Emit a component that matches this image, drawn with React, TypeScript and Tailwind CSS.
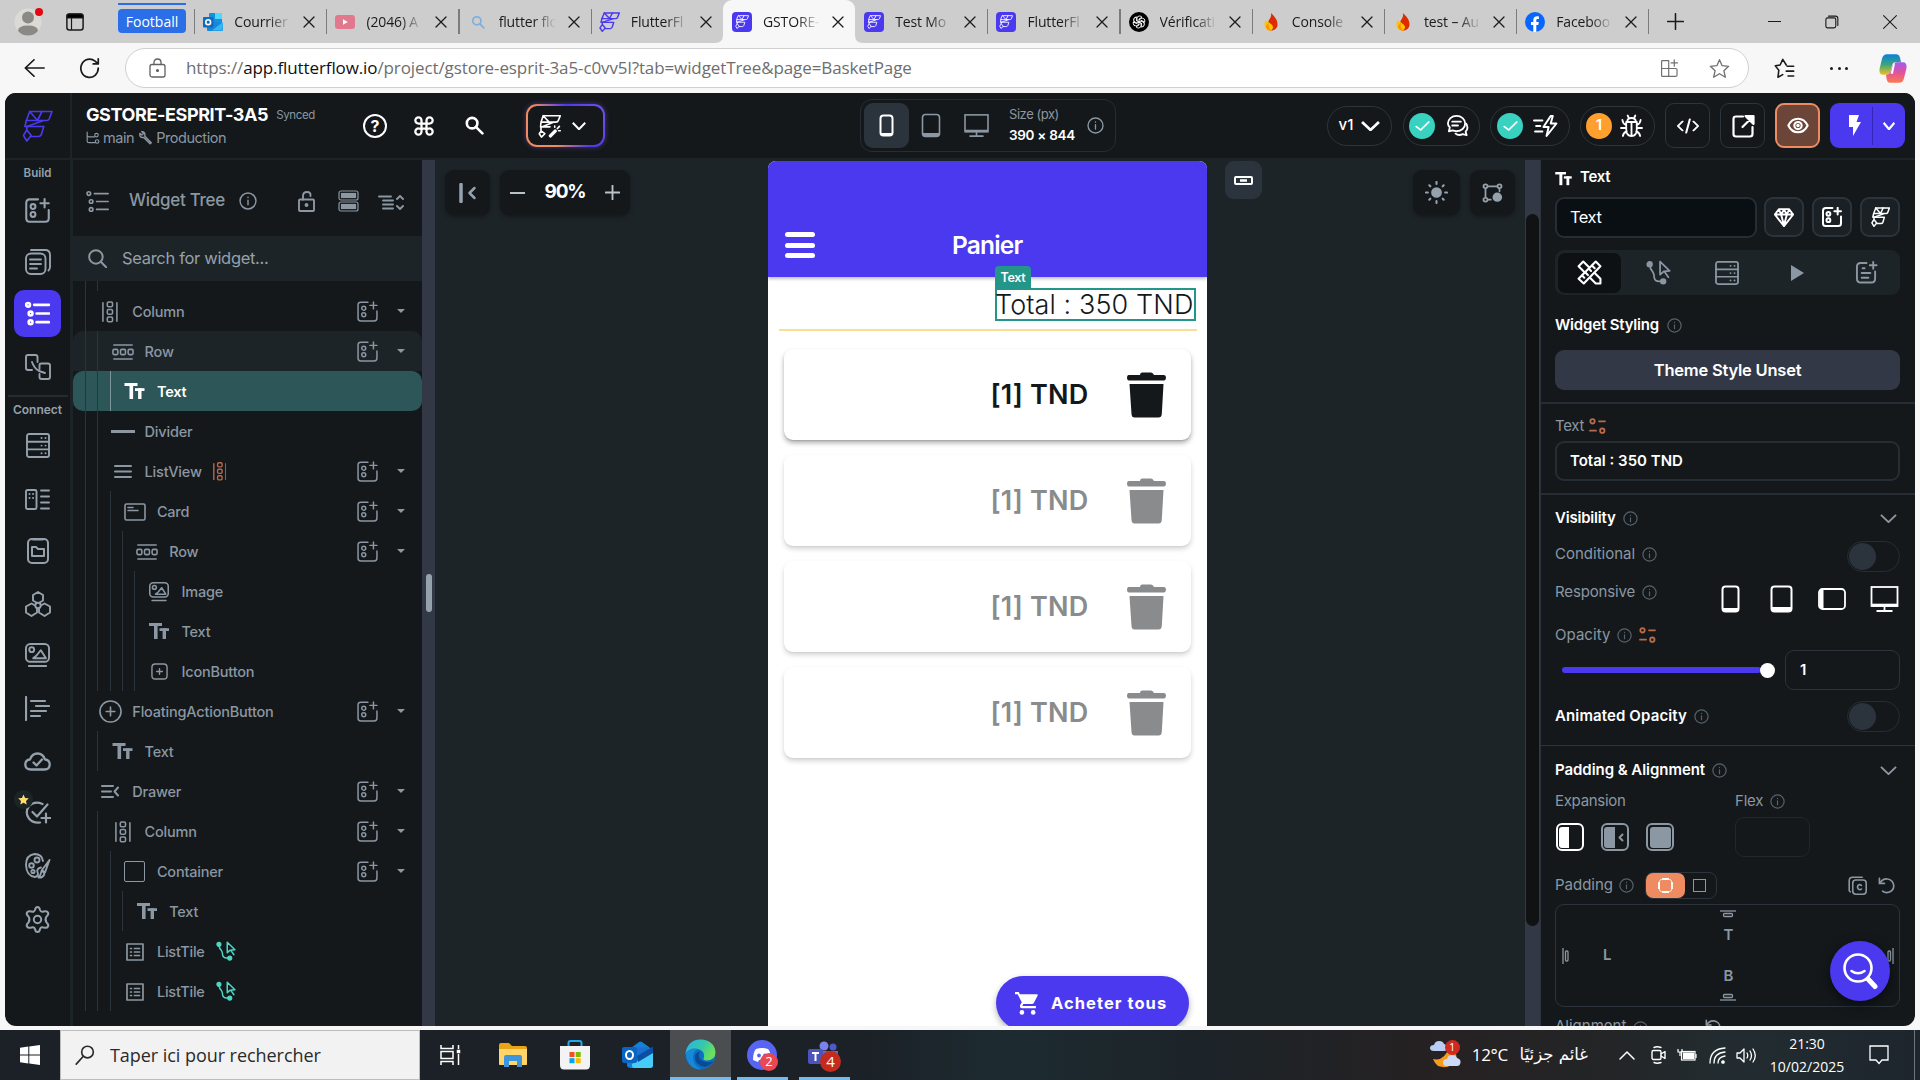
import React from "react";

type P = { className?: string };

function Svg({ w, h = w, vb = "0 0 24 24", sw = 2, className = "", children }: { w: number; h?: number; vb?: string; sw?: number; className?: string; children: React.ReactNode }) {
  return (
    <svg width={w} height={h} viewBox={vb} fill="none" stroke="currentColor" strokeWidth={sw} strokeLinecap="round" strokeLinejoin="round" className={"shrink-0 " + className} preserveAspectRatio="none">
      {children}
    </svg>
  );
}

/* ---------- shared icons ---------- */

function FlutterMark({ w, h = w, sw = 2, className = "" }: { w: number; h?: number; sw?: number; className?: string }) {
  return (
    <Svg w={w} h={h} vb="0 0 32 32" sw={sw} className={className}>
      <path d="M8 1.5H31L28 9Q27.300 10.500 25.500 10.500H4.500Z" />
      <path d="M8 1.500L16 10.500L20.500 1.500" />
      <path d="M4.500 10.500L3 16.500H22.500L20 24.500Q19 26.500 17 26.500H9.500" />
      <path d="M5 16.500L21 11" />
      <path d="M5 16.500V20L1.500 25.500L5 31L9.500 25.500L5 20" />
    </Svg>
  );
}

function Info({ s = 15, className = "text-[#57636c]" }: { s?: number; className?: string }) {
  return (
    <Svg w={s} sw={1.9} className={className}>
      <circle cx="12" cy="12" r="10.6" />
      <path d="M12 11v6M12 7v.3" />
    </Svg>
  );
}

function AddWidget({ s = 22, sw = 2, className = "" }: { s?: number; sw?: number; className?: string }) {
  return (
    <Svg w={s} sw={sw} className={className}>
      <path d="M12.5 1.3H4.5Q1.2 1.3 1.2 4.6V19.4Q1.2 22.8 4.5 22.8H19.4Q22.8 22.8 22.8 19.4V11.5" />
      <path d="M18.8 1v8M14.8 5h8" />
      <circle cx="7.7" cy="8.2" r="2.3" />
      <circle cx="7.7" cy="15.8" r="2.3" />
    </Svg>
  );
}

function TextGlyph({ w = 20, h = 17, className = "" }: { w?: number; h?: number; className?: string }) {
  return (
    <svg width={w} height={h} viewBox="0 0 20 17" fill="currentColor" className={"shrink-0 " + className}>
      <rect x="0" y="0" width="13" height="3" />
      <rect x="5" y="0" width="3.6" height="16" />
      <rect x="10.5" y="5.2" width="9.5" height="2.8" />
      <rect x="13.6" y="5.2" width="3.4" height="10.8" />
    </svg>
  );
}

function ColumnIcon({ s = 22, className = "" }: { s?: number; className?: string }) {
  return (
    <Svg w={s * 0.72} h={s} vb="0 0 17 24" sw={1.7} className={className}>
      <path d="M1 2v20M16 2v20" />
      <rect x="5.7" y="1" width="5.6" height="5.2" rx="1.4" />
      <rect x="5.7" y="9.2" width="5.6" height="5.2" rx="1.4" />
      <rect x="5.7" y="17.4" width="5.6" height="5.2" rx="1.4" />
    </Svg>
  );
}

function RowIcon() {
  return (
    <Svg w={22} h={16} vb="0 0 24 17" sw={1.7}>
      <path d="M2 1h20M2 16h20" />
      <rect x="1" y="5.7" width="5.4" height="5.6" rx="1.4" />
      <rect x="9.3" y="5.7" width="5.4" height="5.6" rx="1.4" />
      <rect x="17.6" y="5.7" width="5.4" height="5.6" rx="1.4" />
    </Svg>
  );
}

function ImageIcon({ s = 26, sw = 1.8 }: { s?: number; sw?: number }) {
  return (
    <Svg w={s} h={s} vb="0 0 26 26" sw={sw}>
      <rect x="1" y="1" width="24" height="18.5" rx="4.5" />
      <circle cx="7" cy="7" r="2.5" />
      <path d="M8.5 15.8L12 13L16.5 7.5L21.8 15.8Z" />
      <path d="M4 24h18" />
    </Svg>
  );
}

function ActionFlow({ s = 19, sw = 1.6, className = "" }: { s?: number; sw?: number; className?: string }) {
  return (
    <Svg w={s} sw={sw} className={className}>
      <circle cx="3.5" cy="4" r="2.2" fill="currentColor" />
      <circle cx="16.5" cy="20.5" r="2.2" fill="currentColor" />
      <path d="M3.5 5Q4 9 6.5 11.5Q8 13.5 7.8 16Q8 20.5 13 20.5H16" />
      <path d="M13.5 1.5V14L17 11L22.7 10.5Z" />
      <path d="M18 11.5L21.5 16.5" />
    </Svg>
  );
}

function DatabaseIcon({ w = 24, h = 25, sw = 1.9, className = "" }: { w?: number; h?: number; sw?: number; className?: string }) {
  return (
    <Svg w={w} h={h} vb="0 0 24 25" sw={sw} className={className}>
      <rect x="1" y="1" width="22" height="23" rx="2" />
      <path d="M1 8.7h22M1 16.4h22" />
      <path d="M15.5 5h.1M19.5 5h.1M15.5 12.6h.1M19.5 12.6h.1M15.5 20.3h.1M19.5 20.3h.1" />
    </Svg>
  );
}

function TreeIcon({ s = 25, sw = 2 }: { s?: number; sw?: number }) {
  return (
    <Svg w={s} h={s} vb="0 0 26 26" sw={sw}>
      <circle cx="3.2" cy="4" r="2" />
      <circle cx="5.8" cy="13" r="2" />
      <circle cx="5.8" cy="22" r="2" />
      <path d="M9.5 4H25M12 13H25M12 22H25" />
    </Svg>
  );
}

function Phone({ w = 13, h = 23, sw = 2, foot = 2 }: { w?: number; h?: number; sw?: number; foot?: number }) {
  return (
    <svg width={w + 2} height={h + 2} className="shrink-0" fill="none" stroke="currentColor" strokeWidth={sw}>
      <rect x="1.5" y="1.5" width={w - 1} height={h - 1} rx="3" />
      <rect x="2" y={h - foot} width={w - 2} height={foot} fill="currentColor" stroke="none" />
    </svg>
  );
}

function Monitor({ w = 25, h = 23 }: { w?: number; h?: number }) {
  return (
    <svg width={w} height={h} viewBox="0 0 28 26" className="shrink-0" fill="none" stroke="currentColor" strokeWidth="1.8">
      <rect x="1" y="1" width="26" height="19" />
      <path d="M1 19.2H27" strokeWidth="3" />
      <path d="M14 20V24M6 25H22" />
    </svg>
  );
}

function SetVar() {
  return (
    <Svg w={17} h={16} vb="0 0 17 16" sw={1.8} className="text-[#b86b4b]">
      <circle cx="3.5" cy="3.3" r="2.2" />
      <circle cx="13.3" cy="12.7" r="2.2" />
      <path d="M10 3.3h6M1 12.7h6" />
    </Svg>
  );
}

function Chevron({ w = 17, h = 9, sw = 2, className = "" }: { w?: number; h?: number; sw?: number; className?: string }) {
  return (
    <svg width={w} height={h} viewBox="0 0 18 10" fill="none" stroke="currentColor" strokeWidth={sw} className={"shrink-0 " + className} preserveAspectRatio="none">
      <path d="M1 1L9 9L17 1" />
    </svg>
  );
}

function Undo({ s = 17 }: { s?: number }) {
  return (
    <Svg w={s} sw={2.4}>
      <path d="M2 2v7h7" />
      <path d="M2.5 9C5 4.500 9 2.500 13 2.800C18.500 3.200 22.300 7.500 22.300 12.700C22.300 18 18 22 12.500 22C10 22 8 21.200 6.500 20" />
    </Svg>
  );
}

function MagicFF({ s = 28 }: { s?: number }) {
  return (
    <Svg w={s} vb="0 0 28 28" sw={1.9}>
      <path d="M6 2H26L23.500 8Q23 9.500 21 9.500H3.500ZM6 2L13 9.500M3.500 9.500L3 15H14M5 15L18 9.500M3.500 15.500V20L1.500 23L4 27L8 23L4 20" />
      <path d="M14.500 25.500L20 20" strokeWidth="4" />
      <path d="M19.500 15.500V14M24 19.500H26M22.500 17L25 14.500" />
    </Svg>
  );
}

/* ---------- browser chrome ---------- */

function FFFav() {
  return (
    <span className="flex h-5 w-5 items-center justify-center rounded-[4px] bg-[#4b39ef] text-white">
      <FlutterMark w={14} h={14} sw={2} />
    </span>
  );
}

function Flame() {
  return (
    <svg width="16" height="20" viewBox="0 0 16 20">
      <path d="M8 1C11 4 15 8 14.500 13C14 17 11 18.500 8 18.500C5 18.500 4 16 4.500 12C5 8 9 6 8 1Z" fill="#dd2c00" />
      <path d="M2.500 8C1 11 1 15 4 17.500C6.500 19.500 9.500 18.500 10 15.500C10.300 12.500 6 11.500 5.500 9.500C4.500 10.500 3.500 10 2.500 8Z" fill="#ffc400" />
      <path d="M6 10C5 14 6 18 9 18.600C5 19 3 17 3 14Z" fill="#ff9100" />
    </svg>
  );
}

const tabs: { t: string; icon: React.ReactNode; active?: boolean }[] = [
  {
    t: "Courrier",
    icon: (
      <svg width="20" height="20" viewBox="0 0 20 20">
        <rect x="6" y="1" width="13" height="10" rx="1" fill="#1490df" />
        <rect x="12" y="1" width="7" height="6" fill="#50d9ff" />
        <path d="M4 9L20 11V18Q20 19 19 19H5Q4 19 4 18Z" fill="#1a86d9" />
        <path d="M20 10L9 18.500H19.500Z" fill="#35b8f1" />
        <rect x="0" y="5" width="10.500" height="10.500" rx="1" fill="#0f6cbd" />
        <circle cx="5.200" cy="10.200" r="2.400" fill="none" stroke="#fff" strokeWidth="1.600" />
      </svg>
    ),
  },
  {
    t: "(2046) A",
    icon: (
      <svg width="20" height="14" viewBox="0 0 20 14">
        <rect width="20" height="14" rx="3" fill="#e2788d" />
        <path d="M8 4.200V9.800L12.800 7Z" fill="#fff" />
      </svg>
    ),
  },
  {
    t: "flutter flo",
    icon: (
      <Svg w={14} sw={3} className="text-[#7fb0dc]">
        <circle cx="10" cy="10" r="7" />
        <path d="M15.500 15.500L22 22" />
      </Svg>
    ),
  },
  { t: "FlutterFl", icon: <FlutterMark w={21} h={20} sw={2.2} className="text-[#4b39ef]" /> },
  { t: "GSTORE-", icon: <FFFav />, active: true },
  { t: "Test Mo", icon: <FFFav /> },
  { t: "FlutterFl", icon: <FFFav /> },
  {
    t: "Vérificati",
    icon: (
      <svg width="20" height="20" viewBox="0 0 20 20">
        <circle cx="10" cy="10" r="10" fill="#000" />
        <g fill="none" stroke="#fff" strokeWidth="0.900">
          {[0, 60, 120, 180, 240, 300].map((a) => (
            <path key={a} transform={`rotate(${a} 10 10)`} d="M8 9V6.300Q8.200 4 10.500 4Q12 4 13 5.200L10 7V10" />
          ))}
        </g>
      </svg>
    ),
  },
  { t: "Console", icon: <Flame /> },
  { t: "test – Au", icon: <Flame /> },
  {
    t: "Faceboo",
    icon: (
      <svg width="20" height="20" viewBox="0 0 20 20">
        <circle cx="10" cy="10" r="10" fill="#0866ff" />
        <path d="M8.300 20V13H6V10H8.300V8.300C8.300 5.500 9.700 4.200 12 4.200C12.800 4.200 13.500 4.300 13.900 4.400V7H12.600C11.600 7 11.300 7.500 11.300 8.500V10H13.800L13.300 13H11.300V20Z" fill="#fff" />
      </svg>
    ),
  },
];

function TabStrip() {
  return (
    <div className="flex h-[43px] shrink-0 items-center bg-[#cdcdcd] font-['Open_Sans','Noto_Sans',sans-serif] text-[14px] text-[#1b1b1b]">
      <div className="ml-[14px] h-[28px] w-[28px] overflow-visible">
        <svg width="29" height="28" viewBox="0 0 29 28">
          <circle cx="14" cy="14" r="13.500" fill="#dcdad5" />
          <circle cx="14" cy="9.500" r="6" fill="#8b8985" />
          <path d="M4 23Q4 17.500 14 17.500T24 23Q20 27.500 14 27.500T4 23Z" fill="#8b8985" />
          <circle cx="25" cy="4" r="4" fill="#e30613" />
        </svg>
      </div>
      <svg width="18" height="18" viewBox="0 0 18 18" className="ml-[24px]">
        <rect x="0.900" y="0.900" width="16.200" height="16.200" rx="2.500" fill="none" stroke="#1b1b1b" strokeWidth="1.500" />
        <path d="M1 5V3Q1 1 3 1H15Q17 1 17 3V5ZM5.500 5V17" fill="#000" stroke="#1b1b1b" strokeWidth="1.200" />
      </svg>
      <div className="ml-[34px] flex h-[43px] w-[68px] flex-col pt-[3px]">
        <div className="h-[2px] bg-[#2b6fe8]" />
        <div className="mt-1 flex h-[24px] items-center justify-center rounded-[4px] bg-[#2b6fe8] text-[14px] text-white">Football</div>
      </div>
      <div className="ml-[8px] flex h-full">
        {tabs.map((x, i) => (
          <div key={i} className={"relative flex h-[43px] w-[132.200px] items-center " + (x.active ? "rounded-t-[9px] bg-[#f7f7f7]" : "")}>
            {x.active && (
              <>
                <svg width="8" height="8" className="absolute -left-2 bottom-0">
                  <path d="M8 0V8H0Q8 8 8 0Z" fill="#f7f7f7" />
                </svg>
                <svg width="8" height="8" className="absolute -right-2 bottom-0">
                  <path d="M0 0V8H8Q0 8 0 0Z" fill="#f7f7f7" />
                </svg>
              </>
            )}
            <div className={"h-[25px] w-[1.300px] " + (x.active || tabs[i - 1]?.active ? "bg-transparent" : "bg-[#7c7c7c]")} />
            <div className="ml-[7px] flex w-[22px] items-center justify-center">{x.icon}</div>
            <div className="ml-[10px] w-[60px] overflow-hidden text-[14px] tracking-[-0.150px] whitespace-nowrap [mask-image:linear-gradient(to_right,#000_58%,transparent_95%)]">{x.t}</div>
            <Svg w={12} sw={2.6} className="ml-[9px] text-[#1b1b1b]">
              <path d="M2 2L22 22M22 2L2 22" />
            </Svg>
          </div>
        ))}
        <div className="my-auto h-[25px] w-[1.300px] bg-[#7c7c7c]" />
      </div>
      <Svg w={17} sw={2.200} className="ml-[18px]">
        <path d="M12 1V23M1 12H23" />
      </Svg>
      <div className="ml-[84px] h-[1.500px] w-[13px] bg-[#1b1b1b]" />
      <Svg w={14} sw={1.900} className="ml-[44px]">
        <rect x="1.500" y="5" width="17" height="17" rx="3" />
        <path d="M6 2H18Q22 2 22 6V18" />
      </Svg>
      <Svg w={14} sw={1.800} className="ml-[44px]">
        <path d="M1 1L23 23M23 1L1 23" />
      </Svg>
    </div>
  );
}

function AddressBar() {
  return (
    <div className="flex h-[50px] shrink-0 items-center bg-[#f7f7f7] pl-[24px] font-['Open_Sans','Noto_Sans',sans-serif]">
      <Svg w={21} h={18} sw={1.900} className="text-[#1b1b1b]">
        <path d="M23 12H2M11.500 1L1.500 12L11.500 23" />
      </Svg>
      <Svg w={22} sw={1.900} className="ml-[34px] text-[#1b1b1b]">
        <path d="M21 12A9.500 10 0 1 1 17.500 4.500L21 7.500M21 2V7.500H15.500" />
      </Svg>
      <div className="ml-[24px] flex h-[40px] w-[1624px] items-center rounded-full border border-[#d0d0d0] bg-white pl-[23px]">
        <Svg w={17} h={20} vb="0 0 17 20" sw={1.300} className="text-[#616161]">
          <rect x="1" y="6.500" width="15" height="12.500" rx="2" />
          <path d="M5 6.500V4.500Q5 1 8.500 1T12 4.500V6.500" />
          <circle cx="8.500" cy="12.500" r="0.900" fill="currentColor" />
        </Svg>
        <div className="ml-[20px] text-[17px] tracking-[-0.105px] whitespace-nowrap text-[#6e6e6e]">
          https://<span className="text-[#101010]">app.flutterflow.io</span>/project/gstore-esprit-3a5-c0vv5l?tab=widgetTree&amp;page=BasketPage
        </div>
        <Svg w={19} sw={1.500} className="mr-[30px] ml-auto text-[#707070]">
          <path d="M2 3Q2 2 3 2H11V12H2ZM2 12H11V22H3Q2 22 2 21ZM11 12H20Q21.500 12 21.500 13.500V20.500Q21.500 22 20 22H11ZM18 1V9M14 5H22" />
        </Svg>
        <Svg w={21} sw={1.500} className="mr-[18px] text-[#707070]">
          <path d="M12 2L15 8.800L22.500 9.500L17 14.500L18.700 22L12 18L5.300 22L7 14.500L1.500 9.500L9 8.800Z" />
        </Svg>
      </div>
      <Svg w={21} sw={1.800} className="ml-[25px] text-[#1b1b1b]">
        <path d="M14 8L10 1.500L7 8L1.500 9L5.500 14L4.500 22L10 19M15 9.500H22.500M14 15H22.500M16 20.500H22.500" />
      </Svg>
      <div className="ml-[35px] flex gap-[4.500px]">
        <span className="h-[3px] w-[3px] rounded-full bg-[#1b1b1b]" />
        <span className="h-[3px] w-[3px] rounded-full bg-[#1b1b1b]" />
        <span className="h-[3px] w-[3px] rounded-full bg-[#1b1b1b]" />
      </div>
      <svg width="28" height="31" viewBox="0 0 28 27" preserveAspectRatio="none" className="ml-[31px]">
        <defs>
          <linearGradient id="cpA" x1="0" y1="0" x2="0" y2="1">
            <stop offset="0" stopColor="#0a7fe0" />
            <stop offset="0.500" stopColor="#3aa57a" />
            <stop offset="1" stopColor="#f2c01e" />
          </linearGradient>
          <linearGradient id="cpB" x1="0" y1="0" x2="0" y2="1">
            <stop offset="0" stopColor="#a35cf0" />
            <stop offset="0.500" stopColor="#e0529c" />
            <stop offset="1" stopColor="#ff7a4a" />
          </linearGradient>
        </defs>
        <path d="M8 1H17Q20 1 21 4L22 8H16Q14 8 13 11L11 17Q10 19 7 19H4Q0 19 0.500 14L3 5Q4 1 8 1Z" fill="url(#cpA)" />
        <path d="M20 26H11Q8 26 7.500 22L7 19Q10 19 11 17L14 10Q15 8 18 8H24Q28 8 27.500 13L25 22Q24 26 20 26Z" fill="url(#cpB)" />
        <path d="M14.500 9L11.500 18H14L16 9Z" fill="#fff" />
      </svg>
    </div>
  );
}

/* ---------- app header ---------- */

function Pill({ className, children }: { className: string; children: React.ReactNode }) {
  return <div className={"flex h-[40px] items-center rounded-full border border-[#2c343c] " + className}>{children}</div>;
}

function CheckDot() {
  return (
    <span className="flex h-[26px] w-[26px] items-center justify-center rounded-full bg-[#39d2c0]">
      <Svg w={15} h={12} sw={3} className="text-white">
        <path d="M2 13L9 20L22 4" />
      </Svg>
    </span>
  );
}

function Header() {
  return (
    <div className="flex h-[67px] shrink-0 items-center border-b-2 border-[#1d2428] bg-[#14181b] text-white">
      <div className="flex h-full w-[67px] items-center justify-center border-r-2 border-[#1d2428]">
        <FlutterMark w={31} h={32} sw={1.700} className="text-[#4b39ef]" />
      </div>
      <div className="ml-[14px] w-[240px] pt-[1px]">
        <div className="flex items-center gap-[8px]">
          <span className="text-[18px] leading-[22px] font-bold tracking-[-0.400px]">GSTORE-ESPRIT-3A5</span>
          <span className="pt-[2px] text-[11.500px] tracking-[-0.350px] text-[#8b97a2]">Synced</span>
        </div>
        <div className="mt-[1px] flex items-center text-[14.500px] tracking-[-0.450px] text-[#8b97a2]">
          <Svg w={14} sw={2}>
            <path d="M2 2V17Q2 20 5 20H15M2 7Q2 10 5 10H15" />
            <circle cx="18" cy="7" r="3" />
            <circle cx="19" cy="18" r="3" />
          </Svg>
          <span className="ml-[3px]">main</span>
          <Svg w={14} sw={2.400} className="ml-[5px]">
            <path d="M10 9L21 20L19 22L8 11Q3 12 1.500 8V4L5 7L8 4L4.500 1Q11 1 10 9Z" />
          </Svg>
          <span className="ml-[3px]">Production</span>
        </div>
      </div>
      <div className="ml-[37px] flex h-[24px] w-[24px] items-center justify-center rounded-full border-2 border-white text-[16px] font-bold">?</div>
      <Svg w={20} sw={2.700} className="ml-[27px]">
        <path d="M9 9H15V15H9ZM9 9V5.500A3.700 3.700 0 1 0 5.500 9H9M15 9H18.500A3.700 3.700 0 1 0 15 5.500V9M15 15V18.500A3.700 3.700 0 1 0 18.500 15H15M9 15H5.500A3.700 3.700 0 1 0 9 18.500V15" />
      </Svg>
      <Svg w={19} sw={3.300} className="ml-[31px]">
        <circle cx="9" cy="9" r="6.700" />
        <path d="M14 14L22 22" />
      </Svg>
      <div className="ml-[42px] h-[43px] w-[79px] rounded-[11px] bg-[linear-gradient(60deg,#ee8b60_0%,#ee8b60_30%,#4b39ef_62%,#6f54e6_100%)] p-[2px] shadow-[0_0_5px_rgba(130,90,220,0.5)]">
        <div className="flex h-full w-full items-center gap-[10px] rounded-[9px] bg-[#14181b] pl-[10px]">
          <MagicFF s={24} />
          <Chevron w={14} h={8} sw={2.600} />
        </div>
      </div>
      <div className="ml-[255px] flex h-[53px] w-[256px] items-center rounded-[12px] border border-[#262d34]">
        <div className="ml-[3px] flex h-[45px] w-[45px] items-center justify-center rounded-[9px] bg-[#2b343c]">
          <Phone w={13} h={21} />
        </div>
        <div className="ml-[12px] text-[#8b97a2]">
          <Phone w={18} h={23} sw={1.600} foot={3} />
        </div>
        <div className="ml-[23px] text-[#8b97a2]">
          <Monitor w={25} h={23} />
        </div>
        <div className="ml-[20px] w-[72px]">
          <div className="text-[13px] leading-[20px] tracking-[-0.450px] text-[#8b97a2]">Size (px)</div>
          <div className="text-[13.500px] leading-[23px] font-semibold tracking-[-0.300px] whitespace-nowrap">390 × 844</div>
        </div>
        <Info s={17} className="ml-[6px] text-[#8b97a2]" />
      </div>
      <Pill className="ml-[211px] w-[65px] justify-center gap-[8px]">
        <span className="text-[15px] font-medium">v1</span>
        <Chevron w={19} h={10} sw={2.500} />
      </Pill>
      <Pill className="ml-[11px] w-[77px] gap-[11px] pl-[5px]">
        <CheckDot />
        <Svg w={23} sw={1.900}>
          <path d="M11 2C16 2 20 5.500 20 10S16 18 11 18C9.500 18 8 17.700 7 17L3 18L4 14Q2 12 2 10C2 5.500 6 2 11 2Z" />
          <path d="M6.500 8H15.500M6.500 12H12.500M21 10Q24 15 20.500 18.500L21.500 22L17.500 21Q13 23 10 20.500" />
        </Svg>
      </Pill>
      <Pill className="ml-[10px] w-[80px] gap-[10px] pl-[6px]">
        <CheckDot />
        <Svg w={25} h={24} sw={1.900}>
          <path d="M17 2L10 13H15L13 22L22.500 9.500H17L19 2ZM1 6.500H9M3 12H7M2 17.500H9" />
        </Svg>
      </Pill>
      <Pill className="ml-[10px] w-[75px] gap-[8px] pl-[5px]">
        <span className="flex h-[26px] w-[26px] items-center justify-center rounded-full bg-[#ff9f2e] text-[15px] font-semibold">1</span>
        <Svg w={23} h={24} sw={1.900}>
          <path d="M7.500 8Q7.500 4 12 4T16.500 8ZM6.500 8H17.500V15Q17.500 22 12 22T6.500 15ZM12 8V22M8 1.500L9.500 4.500M16 1.500L14.500 4.500M6.500 11Q3 10 2.500 6M17.500 11Q21 10 21.500 6M6.500 14H1M17.500 14H23M7 17.500Q3.500 18.500 3 22M17 17.500Q20.500 18.500 21 22" />
        </Svg>
      </Pill>
      <div className="ml-[10px] flex h-[45px] w-[45px] items-center justify-center rounded-[9px] border border-[#2c343c]">
        <Svg w={22} h={18} sw={2.200}>
          <path d="M6 6L1 12L6 18M18 6L23 12L18 18M14 3L10 21" />
        </Svg>
      </div>
      <div className="ml-[10px] flex h-[45px] w-[45px] items-center justify-center rounded-[9px] border border-[#2c343c]">
        <Svg w={24} sw={2.200}>
          <path d="M12 2.500H5Q2.500 2.500 2.500 5V20Q2.500 22.500 5 22.500H19Q21.500 22.500 21.500 20V13" />
          <path d="M11.500 13L20 4.500M14.500 2H22.500V10Z" fill="currentColor" />
        </Svg>
      </div>
      <div className="ml-[10px] flex h-[45px] w-[45px] items-center justify-center rounded-[9px] border-2 border-[#ee8b60] bg-[#6b4538]">
        <Svg w={22} h={18} vb="0 0 24 20" sw={2.300}>
          <path d="M1.500 9.500Q5 2 12 2T22.500 9.500Q19 17 12 17T1.500 9.500Z" />
          <circle cx="12" cy="9.500" r="4" />
          <circle cx="12" cy="9.500" r="0.800" fill="currentColor" />
        </Svg>
      </div>
      <div className="ml-[10px] flex h-[45px] w-[75px] items-center rounded-[9px] bg-[#4b39ef]">
        <div className="flex h-[38px] w-[43px] items-center justify-center border-r border-[#3527b5] pl-[6px]">
          <svg width="13" height="21" viewBox="0 0 13 21" fill="#fff">
            <path d="M1 0H11L8.500 7H13L5 21V12H1Z" />
          </svg>
        </div>
        <Chevron w={12} h={8} sw={3} className="ml-[10px]" />
      </div>
    </div>
  );
}

/* ---------- left rail ---------- */

function Rail() {
  const cell = "flex shrink-0 items-center justify-center";
  return (
    <div className="flex w-[68px] shrink-0 flex-col items-center border-r-[3px] border-[#1d2428] text-[#95a1ac]">
      <div className="h-[26px] pt-[4px] text-[11.500px] leading-[18px] font-semibold">Build</div>
      <div className={cell + " h-[48px]"}>
        <AddWidget s={25} />
      </div>
      <div className={cell + " h-[56px]"}>
        <Svg w={26} vb="0 0 26 26" sw={1.900}>
          <rect x="1" y="4.500" width="19.500" height="20.500" rx="5" />
          <path d="M6 1H20Q25 1 25 6V18Q25 20 23.500 21.500M5 10.500H16M5 15H16M5 19.500H12" />
        </Svg>
      </div>
      <div className={cell + " h-[47px] w-[47px] rounded-[10px] bg-[#4b39ef] text-white"}>
        <TreeIcon s={25} sw={2.700} />
      </div>
      <div className={cell + " h-[58px] pt-[2px]"}>
        <Svg w={26} vb="0 0 26 26" sw={1.900}>
          <path d="M12.500 8V3Q12.500 1 10.500 1H3Q1 1 1 3V14Q1 16 3 16H7M14.500 15V11Q14.500 9.500 16.500 9.500H23Q25 9.500 25 11.500V23Q25 25 23 25H16.500Q14.500 25 14.500 23V20M7 8Q9 14 14 17L20 19" />
        </Svg>
      </div>
      <div className="h-[2px] w-[60px] shrink-0 bg-[#242b31]" />
      <div className="h-[23px] shrink-0 pt-[3px] text-[12px] leading-[20px] font-semibold">Connect</div>
      <div className={cell + " h-[50px]"}>
        <DatabaseIcon />
      </div>
      <div className={cell + " h-[58px]"}>
        <Svg w={25} h={21} vb="0 0 25 21" sw={1.900}>
          <rect x="1" y="1" width="10.500" height="19" rx="1.500" />
          <path d="M4.500 5H4.600M8 5H8.100M4.500 9H4.600M8 9H8.100M16 1.500H24M16 7.500H24M16 13.500H24M16 19.500H24" />
        </Svg>
      </div>
      <div className={cell + " h-[46px]"}>
        <Svg w={22} h={26} vb="0 0 22 26" sw={2}>
          <rect x="1" y="1" width="20" height="24" rx="4" />
          <path d="M6 1.500H16M5 9H9L11 11H17V18H5Z" />
        </Svg>
      </div>
      <div className={cell + " h-[60px]"}>
        <Svg w={26} vb="0 0 26 26" sw={1.900}>
          <path d="M13 1L18 4V9.500L13 12.500L8 9.500V4ZM6.500 12.500L12 15.500V21.500L6.500 25L1 21.500V15.500ZM19.500 12.500L25 15.500V21.500L19.500 25L14 21.500V15.500Z" />
          <circle cx="13" cy="14.500" r="2.700" fill="#14181b" />
        </Svg>
      </div>
      <div className={cell + " h-[42px]"}>
        <ImageIcon s={25} sw={2} />
      </div>
      <div className={cell + " h-[64px]"}>
        <Svg w={25} vb="0 0 25 25" sw={2.200}>
          <path d="M1 1V24M6 5H20M11 10H24M6 15H21M6 20H15" />
        </Svg>
      </div>
      <div className={cell + " h-[42px]"}>
        <Svg w={27} h={19} vb="0 0 27 19" sw={2.300}>
          <path d="M7 17.500Q1.300 17.500 1.300 12.500Q1.300 8 6 7.500Q8 1.500 13.500 1.500T21 7.500Q25.700 8 25.700 12.500Q25.700 17.500 20.500 17.500ZM9.500 10.500L12.500 13.500L18 7.500" />
        </Svg>
      </div>
      <div className={cell + " relative h-[62px]"}>
        <Svg w={26} h={24} vb="0 0 26 24" sw={2.200}>
          <path d="M17.500 3Q9.500 -0.500 4 5Q-0.500 11.500 4 17.500Q8 22.500 15 21.500M7.500 11L12 15.500L22.500 3.500M21 12.500V21.500M16.500 17H25.500" />
        </Svg>
        <span className="absolute top-[8px] -left-[11px] flex h-[19px] w-[19px] items-center justify-center rounded-full bg-[#1d2428]">
          <svg width="11" height="11" viewBox="0 0 24 24" fill="#ffdc6b">
            <path d="M12 1L15.500 8.500L23.500 9.500L17.500 15L19 23L12 19L5 23L6.500 15L0.500 9.500L8.500 8.500Z" />
          </svg>
        </span>
      </div>
      <div className={cell + " h-[44px]"}>
        <Svg w={26} vb="0 0 26 26" sw={1.900}>
          <path d="M18 8Q17 1 9.500 1Q1 2 1 12Q1.500 23 10 24Q14 23 12.500 19Q11.500 15.500 16 14.500M24.500 7L17 17L20 19.500ZM16.500 18Q20 19 19 22Q17.500 25 13.500 24.500Q16 22 16.500 18Z" />
          <circle cx="12" cy="7" r="2.500" />
          <circle cx="6.500" cy="12.500" r="2.300" />
          <circle cx="8" cy="18.500" r="1.600" />
        </Svg>
      </div>
      <div className={cell + " h-[62px]"}>
        <Svg w={27} vb="0 0 27 27" sw={2}>
          <circle cx="13.500" cy="13.500" r="3.700" />
          <path d="M11 4Q11.500 1 13.500 1T16 4Q17 6.500 19.500 5.500Q23 4.500 24 6.500T22.500 10.500Q20.500 13.500 22.500 16.500Q25 18.500 24 20.500T19.500 21.500Q17 20.500 16 23Q15.500 26 13.500 26T11 23Q10 20.500 7.500 21.500Q4 22.500 3 20.500T4.500 16.500Q6.500 13.500 4.500 10.500Q2 8.500 3 6.500T7.500 5.500Q10 6.500 11 4Z" />
        </Svg>
      </div>
    </div>
  );
}

/* ---------- widget tree ---------- */

const ListTileIcon = () => (
  <Svg w={18} vb="0 0 18 18" sw={1.700}>
    <rect x="1" y="1" width="16" height="16" />
    <path d="M4.500 5.500H5.500M4.500 9H5.500M4.500 12.500H5.500M8.500 5.500H13.500M8.500 9H13.500M8.500 12.500H13.500" />
  </Svg>
);

type Node = { k: number; t: string; icon: React.ReactNode; add?: boolean; extra?: React.ReactNode; state?: "hover" | "sel" };
const nodes: Node[] = [
  { k: 0, t: "Column", icon: <ColumnIcon />, add: true },
  { k: 1, t: "Row", icon: <RowIcon />, add: true, state: "hover" },
  { k: 2, t: "Text", icon: <TextGlyph w={21} h={17} />, state: "sel" },
  { k: 1, t: "Divider", icon: <div className="h-[2.500px] w-[24px] bg-current" /> },
  {
    k: 1,
    t: "ListView",
    icon: (
      <Svg w={18} h={13} vb="0 0 18 13" sw={2}>
        <path d="M1 1H17M1 6.500H17M1 12H17" />
      </Svg>
    ),
    add: true,
    extra: <ColumnIcon s={19} className="text-[#b86b4b]" />,
  },
  {
    k: 2,
    t: "Card",
    icon: (
      <Svg w={22} h={18} vb="0 0 22 18" sw={1.600}>
        <rect x="1" y="1" width="20" height="16" rx="1.500" />
        <path d="M4 4.500H9M4 7.500H14" />
      </Svg>
    ),
    add: true,
  },
  { k: 3, t: "Row", icon: <RowIcon />, add: true },
  { k: 4, t: "Image", icon: <ImageIcon s={20} sw={2} /> },
  { k: 4, t: "Text", icon: <TextGlyph w={20} h={17} /> },
  {
    k: 4,
    t: "IconButton",
    icon: (
      <Svg w={17} vb="0 0 18 18" sw={1.500}>
        <rect x="1" y="1" width="16" height="16" rx="3.500" />
        <path d="M9 6V12M6 9H12" />
      </Svg>
    ),
  },
  {
    k: 0,
    t: "FloatingActionButton",
    icon: (
      <Svg w={23} sw={1.700}>
        <circle cx="12" cy="12" r="11" />
        <path d="M12 7.500V16.500M7.500 12H16.500" />
      </Svg>
    ),
    add: true,
  },
  { k: 1, t: "Text", icon: <TextGlyph w={21} h={17} /> },
  {
    k: 0,
    t: "Drawer",
    icon: (
      <Svg w={18} h={13} vb="0 0 18 13" sw={2}>
        <path d="M1 1H12M1 6.500H10M1 12H12M17 2.500L13.500 6.500L17 10.500" />
      </Svg>
    ),
    add: true,
  },
  { k: 1, t: "Column", icon: <ColumnIcon />, add: true },
  { k: 2, t: "Container", icon: <div className="h-[21px] w-[21px] rounded-[2px] border-[1.500px] border-current" />, add: true },
  { k: 3, t: "Text", icon: <TextGlyph w={20} h={17} /> },
  { k: 2, t: "ListTile", icon: <ListTileIcon />, extra: <ActionFlow s={20} sw={1.800} className="text-[#4fd6c2]" /> },
  { k: 2, t: "ListTile", icon: <ListTileIcon />, extra: <ActionFlow s={20} sw={1.800} className="text-[#4fd6c2]" /> },
];

function Guides({ n, sel }: { n: number; sel?: boolean }) {
  return (
    <>
      {Array.from({ length: n }, (_, i) => (
        <div key={i} className={"h-full w-[12.300px] border-l-[1.500px] " + (sel && i === n - 1 ? "border-[#7d9599]" : "border-[#2b343c]")} />
      ))}
    </>
  );
}

function TreePanel() {
  return (
    <div className="flex w-[349px] shrink-0 flex-col text-[#8b97a2]">
      <div className="flex h-[76px] shrink-0 items-center pt-[6px] pl-[13px]">
        <TreeIcon s={23} sw={1.900} />
        <span className="ml-[20px] text-[17px] font-medium tracking-[-0.280px]">Widget Tree</span>
        <Info s={18} className="ml-[14px] text-[#8b97a2]" />
        <Svg w={17} h={21} vb="0 0 17 21" sw={1.900} className="ml-[41px]">
          <rect x="1" y="8.500" width="15" height="11.500" rx="1" />
          <path d="M5 8.500V5Q5 1 9 1T12.500 5" />
          <circle cx="8.500" cy="14" r="1" fill="currentColor" />
        </Svg>
        <svg width="21" height="22" viewBox="0 0 21 22" className="ml-[23px] shrink-0" fill="none" stroke="currentColor" strokeWidth="1.200">
          <rect x="1" y="1" width="19" height="9" rx="2" />
          <rect x="1" y="12" width="19" height="9" rx="2" />
          <rect x="3.500" y="3.500" width="14" height="4" fill="currentColor" />
          <rect x="3.500" y="14.500" width="14" height="4" fill="currentColor" />
        </svg>
        <Svg w={26} h={15} vb="0 0 26 15" sw={1.900} className="mt-[3px] ml-[19px]">
          <path d="M1 1.500H13M5 5.500H15M5 9.500H15M5 13.500H15M19 4L22 1L25 4M19 11L22 14L25 11" />
        </Svg>
      </div>
      <div className="flex h-[45px] shrink-0 items-center bg-[#1d2428] pl-[15px]">
        <Svg w={19} sw={2.500}>
          <circle cx="10" cy="10" r="8.500" />
          <path d="M16.500 16.500L23 23" />
        </Svg>
        <span className="ml-[15px] text-[16.500px] tracking-[-0.320px] text-[#95a1ac]">Search for widget...</span>
      </div>
      <div className="flex h-[10px] shrink-0 pl-[12px]">
        <Guides n={2} />
      </div>
      {nodes.map((n, i) => (
        <div
          key={i}
          className={
            "flex h-[40px] shrink-0 items-center pl-[12px] " +
            (n.state === "sel" ? "rounded-[10px] bg-[#2c5658] font-semibold text-white" : n.state === "hover" ? "rounded-t-[10px] bg-[#1d2428] font-medium" : "font-medium")
          }
        >
          <Guides n={n.k + 1} sel={n.state === "sel"} />
          <div className="flex w-[26px] shrink-0 items-center justify-center pt-[1px]">{n.icon}</div>
          <span className="ml-[9px] pt-[1px] text-[14.500px] tracking-[-0.200px]">{n.t}</span>
          {n.extra && <span className="ml-[11px]">{n.extra}</span>}
          {n.add && (
            <div className="mr-[17px] ml-auto flex items-center gap-[19px]">
              <AddWidget s={21} sw={1.700} />
              <svg width="8" height="4" viewBox="0 0 8 4" fill="currentColor">
                <path d="M0 0H8L4 4Z" />
              </svg>
            </div>
          )}
        </div>
      ))}
    </div>
  );
}

/* ---------- canvas ---------- */

function Trash({ className }: P) {
  return (
    <svg width="39" height="46" viewBox="0 0 39 46" fill="currentColor" className={className}>
      <path d="M13 3Q13 0.500 15 0.500H24Q26 0.500 27 3H37Q39 3 39 5.500T37 8.500H2Q0 8.500 0 5.500T2 3ZM2.500 12H36.500L34.800 42Q34.500 45.500 31.500 45.500H7.500Q4.800 45.500 4.500 42Z" />
    </svg>
  );
}

function PhonePreview() {
  return (
    <div className="relative mt-[1px] ml-[278px] flex h-[865px] w-[439px] shrink-0 flex-col overflow-hidden rounded-t-[8px] bg-white font-['Inter',sans-serif]">
      <div className="z-10 flex h-[116px] shrink-0 items-end bg-[#4b39ef] pb-[17px] pl-[17px] text-white shadow-[0_2px_3px_rgba(0,0,0,0.25)]">
        <div className="mb-[2px] flex w-[30px] flex-col gap-[5.500px]">
          <span className="h-[5px] rounded-full bg-white" />
          <span className="h-[5px] rounded-full bg-white" />
          <span className="h-[5px] rounded-full bg-white" />
        </div>
        <span className="ml-[137px] text-[24.500px] leading-[30px] font-semibold tracking-[-0.800px]">Panier</span>
      </div>
      <div className="relative mt-[11px] mr-[11px] h-[33px] w-[201px] shrink-0 self-end border-2 border-[#249689] text-[27px] leading-[29px] font-light tracking-[0.100px] whitespace-nowrap text-[#14181b]">
        <span className="-ml-[2px]">Total : 350 TND</span>
        <span className="absolute -top-[24px] -left-[2px] z-20 flex h-[23px] w-[36px] items-center justify-center rounded-t-[4px] bg-[#249689] text-[12.500px] font-semibold tracking-[-0.300px] text-white">Text</span>
      </div>
      <div className="mt-[8px] mr-[10px] ml-[11px] h-[2px] shrink-0 bg-[#fbdf94]" />
      <div className="mt-[18px] flex flex-col gap-[15px] pr-[16px] pl-[16px]">
        {[0, 1, 2, 3].map((i) => (
          <div
            key={i}
            className={
              "flex h-[91px] items-center justify-end rounded-[9px] bg-white pr-[25.500px] " +
              (i === 0 ? "text-[#14181b] shadow-[0_3px_5px_rgba(0,0,0,0.32),0_1px_1px_rgba(0,0,0,0.10)]" : "text-[#8a8b8d] shadow-[0_3px_5px_rgba(0,0,0,0.17),0_1px_1px_rgba(0,0,0,0.04)]")
            }
          >
            <span className="mt-[1px] mr-[38px] text-[27px] font-semibold tracking-[0.200px]">[1] TND</span>
            <Trash />
          </div>
        ))}
      </div>
      <div className="absolute top-[815px] left-[228px] flex h-[54px] w-[193px] items-center rounded-full bg-[#4b39ef] pl-[19px] text-white shadow-[0_3px_6px_rgba(0,0,0,0.3)]">
        <svg width="23" height="23" viewBox="0 0 22 22" fill="currentColor">
          <path d="M0 0H3.600L4.600 2.200H21Q22 2.200 21.700 3.300L18 10.500Q17.400 11.500 16.200 11.500H8L7 13.300H20V15.500H6.500Q4 15 5 12.500L6.500 9.800L2.500 2.200H0Z" />
          <circle cx="6.600" cy="19.500" r="2.200" />
          <circle cx="17.400" cy="19.500" r="2.200" />
        </svg>
        <span className="mt-[1px] ml-[13px] text-[16.500px] font-bold tracking-[1.050px] whitespace-nowrap">Acheter tous</span>
      </div>
    </div>
  );
}

function Canvas() {
  const btn = "flex h-[45px] shrink-0 items-center rounded-[9px] bg-[#14181b] shadow-[0_2px_4px_rgba(0,0,0,0.35)]";
  return (
    <div className="flex w-[1090px] shrink-0 items-start bg-[#1d2428] text-[#95a1ac]">
      <div className="mt-[10px] ml-[10px] flex w-[185px] shrink-0">
        <div className={btn + " w-[45px] justify-center"}>
          <Svg w={18} h={20} vb="0 0 18 20" sw={2.500}>
            <path d="M2 1.500V18.500" strokeWidth="3.500" />
            <path d="M15.500 5L10.500 10L15.500 15" />
          </Svg>
        </div>
        <div className={btn + " ml-[10px] w-[130px] justify-between px-[10px]"}>
          <span className="h-[2px] w-[15px] bg-[#b9c1c9]" />
          <span className="text-[19px] font-bold tracking-[-1.200px] text-white">90%</span>
          <Svg w={15} sw={3} className="text-[#b9c1c9]">
            <path d="M12 1V23M1 12H23" />
          </Svg>
        </div>
      </div>
      <div className="-ml-[140px] flex">
        <PhonePreview />
      </div>
      <div className="mt-[1px] ml-[18px] flex h-[38px] w-[37px] shrink-0 items-center justify-center rounded-[9px] bg-[#2b343c]">
        <svg width="19" height="9" viewBox="0 0 19 9" fill="none" stroke="#fff" strokeWidth="2">
          <rect x="1" y="1" width="17" height="7" rx="1" />
          <path d="M6 4.500H13" strokeWidth="2.500" />
        </svg>
      </div>
      <div className={btn + " mt-[10px] ml-[151px] w-[47px] justify-center"}>
        <Svg w={23} sw={2.200}>
          <circle cx="12" cy="12" r="4.500" fill="currentColor" />
          <path d="M12 1V3M12 21V23M1 12H3M21 12H23M4.500 4.500L5.500 5.500M18.500 18.500L19.500 19.500M19.500 4.500L18.500 5.500M5.500 18.500L4.500 19.500" />
        </Svg>
      </div>
      <div className={btn + " mt-[10px] ml-[10px] w-[45px] justify-center"}>
        <Svg w={21} h={20} sw={2}>
          <circle cx="4" cy="4" r="2.300" />
          <circle cx="20" cy="4" r="2.300" />
          <circle cx="4" cy="20" r="2.300" />
          <path d="M6.500 4H17.500M4 6.500V17.500M20 6.500V10M6.500 20H10" />
          <circle cx="17.500" cy="17" r="4.500" fill="currentColor" />
          <circle cx="17.500" cy="17" r="1" fill="#14181b" />
        </Svg>
      </div>
    </div>
  );
}

/* ---------- properties ---------- */

function Toggle() {
  return (
    <span className="flex h-[31px] w-[53px] items-center rounded-full border border-[#262d34] pl-[1px]">
      <span className="h-[27px] w-[27px] rounded-full bg-[#2b343c]" />
    </span>
  );
}

function SquareBtn({ children }: { children: React.ReactNode }) {
  return <div className="flex h-[40px] w-[40px] items-center justify-center rounded-[9px] border-2 border-[#2b343c] bg-[#1a2024]">{children}</div>;
}

function Properties() {
  const label = "text-[15px] text-[#8b97a2]";
  const head = "text-[15px] font-semibold text-white";
  return (
    <div className="flex w-[375px] shrink-0 flex-col overflow-hidden border-l border-[#2b343c] text-white">
      <div className="flex h-[244px] shrink-0 flex-col border-b-2 border-[#262d34] pr-[15px] pl-[14px]">
        <div className="flex h-[34px] items-center">
          <TextGlyph w={17} h={14} className="mt-[3px]" />
          <span className="ml-[8px] text-[15px] font-semibold tracking-[-0.300px]">Text</span>
        </div>
        <div className="mt-[3px] flex">
          <div className="mr-auto flex h-[41px] w-[202px] items-center rounded-[9px] border-2 border-[#262d34] bg-[#0a0f14] pl-[13px] text-[16.500px] tracking-[-0.500px]">Text</div>
          <div className="flex gap-[8px]">
            <SquareBtn>
              <Svg w={20} sw={2.300}>
                <path d="M6 2.500H18L23 9L12 23L1 9ZM1.500 9H22.500M8.500 9L12 22L15.500 9L12 3ZM8.500 9L6 3M15.500 9L18 3" />
              </Svg>
            </SquareBtn>
            <SquareBtn>
              <AddWidget s={20} sw={2.400} />
            </SquareBtn>
            <SquareBtn>
              <FlutterMark w={19} h={20} sw={2.500} />
            </SquareBtn>
          </div>
        </div>
        <div className="mt-[12px] flex h-[45px] items-center rounded-[9px] bg-[#1d2428] px-[3px] text-[#8b97a2]">
          <div className="flex h-[40px] w-[63px] items-center justify-center rounded-[7px] bg-[#0e1114] text-white">
            <Svg w={25} sw={2}>
              <path d="M6 1.500L1.500 6L18 22.500L22.500 22.500V18L14.500 10M12 7.500L6 1.500" />
              <path d="M18 1.500L22.500 6L6.500 22.500L1.500 18Z" fill="#0e1114" />
              <path d="M5 15L7 17M8 12L10.500 14.500M11.500 8.500L13.500 10.500M14.500 5.500L17 8" />
            </Svg>
          </div>
          <div className="flex flex-1 items-center justify-between pr-[19px] pl-[25px]">
            <ActionFlow s={25} sw={1.700} />
            <DatabaseIcon w={24} h={24} sw={1.800} />
            <svg width="13" height="16" viewBox="0 0 13 16" fill="currentColor" className="mx-[7px]">
              <path d="M0 0L13 8L0 16Z" />
            </svg>
            <Svg w={23} sw={2}>
              <path d="M12 2H6Q2 2 2 6V18Q2 22.500 6 22.500H17Q21 22.500 21 18V11M19 1V8M15.500 4.500H22.500M8 7.500H10M7 12.500H16M7 17.500H14" />
            </Svg>
          </div>
        </div>
        <div className="mt-[20px] flex h-[20px] items-center gap-[8px]">
          <span className={head + " tracking-[-0.180px]"}>Widget Styling</span>
          <Info />
        </div>
        <div className="mt-[15px] flex h-[40px] items-center justify-center rounded-[9px] bg-[#323845] text-[16.500px] font-semibold tracking-[-0.220px]">Theme Style Unset</div>
      </div>
      <div className="h-[91px] shrink-0 border-b-2 border-[#262d34] pt-[12px] pr-[15px] pl-[14px]">
        <div className="flex h-[20px] items-center gap-[5px]">
          <span className={label + " tracking-[-0.300px]"}>Text</span>
          <SetVar />
        </div>
        <div className="mt-[5px] flex h-[40px] items-center rounded-[9px] border-2 border-[#262d34] pl-[13px] text-[15px] font-semibold">Total : 350 TND</div>
      </div>
      <div className="flex h-[251px] shrink-0 flex-col border-b border-[#2b343c] pr-[15px] pl-[14px]">
        <div className="flex h-[46px] items-center gap-[7px] pt-[1px]">
          <span className={head + " tracking-[-0.200px]"}>Visibility</span>
          <Info />
          <Chevron className="mr-[3px] ml-auto text-[#8b97a2]" />
        </div>
        <div className="flex h-[30px] items-center gap-[7px]">
          <span className={label + " mb-[4px]"}>Conditional</span>
          <Info className="mb-[4px] text-[#57636c]" />
          <span className="ml-auto">
            <Toggle />
          </span>
        </div>
        <div className="flex h-[56px] items-center gap-[7px]">
          <span className={label + " mb-[14px] tracking-[-0.150px]"}>Responsive</span>
          <Info className="mb-[14px] text-[#57636c]" />
          <div className="mr-[1px] ml-auto flex items-center">
            <Phone w={17} h={26} foot={3} />
            <span className="ml-[30px] flex">
              <Phone w={21} h={26} foot={4} />
            </span>
            <svg width="29" height="22" className="mr-[23px] ml-[25px]" fill="none" stroke="#fff" strokeWidth="1.800">
              <rect x="1" y="1" width="26" height="20" rx="3.500" />
              <path d="M3.500 2V20" strokeWidth="4" />
            </svg>
            <Monitor w={29} h={26} />
          </div>
        </div>
        <div className="flex h-[16px] items-center gap-[7px]">
          <span className={label + " tracking-[0.050px]"}>Opacity</span>
          <Info />
          <SetVar />
        </div>
        <div className="mt-[7px] flex h-[40px] shrink-0 items-center">
          <div className="ml-[7px] h-[6px] w-[199px] rounded-full bg-[#4b39ef]" />
          <div className="-ml-[1px] h-[15px] w-[15px] rounded-full bg-white" />
          <div className="ml-auto flex h-[40px] w-[115px] items-center rounded-[9px] border border-[#2b343c] pl-[14px] text-[15px] font-semibold">1</div>
        </div>
        <div className="mt-[11px] flex h-[30px] shrink-0 items-center gap-[7px]">
          <span className={head + " tracking-[0.120px]"}>Animated Opacity</span>
          <Info />
          <span className="ml-auto">
            <Toggle />
          </span>
        </div>
      </div>
      <div className="flex flex-col pr-[15px] pl-[14px]">
        <div className="flex h-[48px] items-center gap-[7px]">
          <span className={head + " tracking-[-0.050px]"}>Padding &amp; Alignment</span>
          <Info />
          <Chevron className="mr-[3px] ml-auto text-[#8b97a2]" />
        </div>
        <div className="flex h-[14px] items-center">
          <span className={label + " w-[180px] tracking-[-0.300px]"}>Expansion</span>
          <span className={label + " tracking-[-0.200px]"}>Flex</span>
          <Info className="ml-[7px] text-[#57636c]" />
        </div>
        <div className="mt-[9px] flex h-[40px] items-center">
          <div className="flex w-[180px] gap-[17px] pl-px">
            <span className="flex h-[28px] w-[28px] items-center rounded-[6px] border-2 border-white pl-[1px]">
              <span className="h-[21px] w-[10px] rounded-l-[3px] bg-white" />
            </span>
            <span className="flex h-[28px] w-[28px] items-center rounded-[6px] border-2 border-[#8b97a2] pl-[1px] text-[#8b97a2]">
              <span className="h-[21px] w-[11px] rounded-l-[3px] bg-[#8b97a2]" />
              <Svg w={6} h={9} vb="0 0 6 9" sw={2} className="ml-[3px]">
                <path d="M4.500 1.500L1.500 4.500L4.500 7.500" />
              </Svg>
            </span>
            <span className="flex h-[28px] w-[28px] items-center justify-center rounded-[6px] border-2 border-[#8b97a2]">
              <span className="h-[21px] w-[21px] rounded-[3px] bg-[#8b97a2]" />
            </span>
          </div>
          <div className="h-[40px] w-[75px] rounded-[9px] border border-[#21272d]" />
        </div>
        <div className="mt-[15px] flex h-[27px] items-center">
          <span className={label}>Padding</span>
          <Info className="ml-[6px] text-[#57636c]" />
          <div className="ml-[11px] flex h-[27px] w-[72px] items-center rounded-[8px] border border-[#2b343c]">
            <span className="flex h-[25px] w-[39px] items-center justify-center rounded-[7px] bg-[#ee8b60]">
              <svg width="15" height="15" fill="none" stroke="#fff" strokeWidth="1.800">
                <path d="M1 4V11M14 4V11M4 1H11M4 14H11" />
                <rect x="1.500" y="1.500" width="12" height="12" rx="2" strokeWidth="0.800" />
              </svg>
            </span>
            <span className="ml-[8px] h-[13px] w-[13px] border-[1.500px] border-[#8b97a2]" />
          </div>
          <div className="mr-[5px] ml-auto flex items-center gap-[11px] text-[#8b97a2]">
            <Svg w={19} sw={2}>
              <rect x="6" y="5" width="17" height="18" rx="4" />
              <path d="M18 1.500H6Q1.500 1.500 1.500 6V18Q1.500 19 3 20M17 12Q15 10 13 11.500Q11 14 13 16.500Q15 18 17 16.500" />
            </Svg>
            <Undo />
          </div>
        </div>
        <div className="mt-[5px] flex h-[103px] items-center rounded-[9px] border border-[#2b343c] text-[15px] font-semibold text-[#8b97a2]">
          <svg width="7" height="16" className="ml-[6px]" fill="none" stroke="currentColor" strokeWidth="1.300">
            <path d="M1 0V16" />
            <rect x="3.500" y="3" width="2.500" height="10" rx="1" />
          </svg>
          <span className="ml-[34px]">L</span>
          <div className="ml-[108px] flex h-full w-[18px] flex-col items-center justify-between py-[5px]">
            <svg width="16" height="8" fill="none" stroke="currentColor" strokeWidth="1.300">
              <path d="M0 1H16" />
              <rect x="3.500" y="3.500" width="9" height="3" rx="1" />
            </svg>
            <span className="leading-[18px]">T</span>
            <span className="mt-[14px] leading-[18px]">B</span>
            <svg width="16" height="8" fill="none" stroke="currentColor" strokeWidth="1.300">
              <path d="M0 7H16" />
              <rect x="3.500" y="1.500" width="9" height="3" rx="1" />
            </svg>
          </div>
          <svg width="7" height="16" className="mr-[5px] ml-auto" fill="none" stroke="currentColor" strokeWidth="1.300">
            <path d="M6 0V16" />
            <rect x="1" y="3" width="2.500" height="10" rx="1" />
          </svg>
        </div>
        <div className="mt-[9px] flex h-[20px] items-center text-[#8b97a2]">
          <span className={label}>Alignment</span>
          <Info className="mt-[4px] ml-[7px] text-[#57636c]" />
          <span className="mt-[2px] ml-[57px]">
            <Undo s={16} />
          </span>
        </div>
      </div>
    </div>
  );
}

/* ---------- taskbar ---------- */

function Badge({ n, className }: { n: string; className: string }) {
  return <span className={"absolute flex items-center justify-center rounded-full text-white " + className}>{n}</span>;
}

function Taskbar() {
  return (
    <div className="flex h-[50px] shrink-0 items-center bg-[linear-gradient(90deg,#1b2127_0%,#1b2127_45%,#1d2b30_52%,#1c2429_62%,#262122_75%,#232527_84%,#222c30_90%,#1d262d_100%)] font-['Open_Sans','Noto_Sans','DejaVu_Sans',sans-serif] text-white">
      <svg width="20" height="20" viewBox="0 0 20 20" fill="#fff" className="ml-[20px]">
        <path d="M0 2.800L8.300 1.600V9.500H0ZM9.300 1.500L20 0V9.500H9.300ZM0 10.500H8.300V18.400L0 17.200ZM9.300 10.500H20V20L9.300 18.500Z" />
      </svg>
      <div className="ml-[20px] flex h-[50px] w-[360px] items-center border border-[#bcbcbc] bg-[#f2f2f2] text-[#2a2a2a]">
        <Svg w={20} h={20} sw={2} className="ml-[14px]">
          <circle cx="15" cy="8.500" r="7" />
          <path d="M10 13.500L1.500 23" />
        </Svg>
        <span className="ml-[15px] text-[18px] tracking-[-0.050px]">Taper ici pour rechercher</span>
      </div>
      <svg width="21" height="20" viewBox="0 0 21 20" fill="none" stroke="#fff" strokeWidth="1.500" className="ml-[20px]">
        <path d="M1 0V3.500H13V0M1 20V16.500H13V20M1 6.500H13V13.500H1ZM18.500 0V4M18.500 9V20" />
        <rect x="17.500" y="5.500" width="2" height="2" fill="#fff" />
      </svg>
      <svg width="28" height="24" viewBox="0 0 28 24" className="ml-[38px]">
        <path d="M0 2Q0 0 2 0H10L13 3H26Q28 3 28 5V22H0Z" fill="#e8a317" />
        <path d="M0 6H28V20Q28 22 26 22H2Q0 22 0 20Z" fill="#ffd567" />
        <path d="M5 24V14Q5 12 7 12H21Q23 12 23 14V24H18V18H10V24Z" fill="#3f95dc" />
      </svg>
      <svg width="30" height="30" viewBox="0 0 30 30" className="ml-[33px]">
        <path d="M8.500 8V3Q8.500 1 10.500 1H19.500Q21.500 1 21.500 3V8" fill="none" stroke="#22a7e8" strokeWidth="2" />
        <path d="M0 6H30V25Q30 29.500 26 29.500H4Q0 29.500 0 25Z" fill="#f3f3f3" />
        <rect x="9.500" y="12" width="5" height="5" fill="#f25022" />
        <rect x="15.700" y="12" width="5" height="5" fill="#7fba00" />
        <rect x="9.500" y="18.200" width="5" height="5" fill="#00a4ef" />
        <rect x="15.700" y="18.200" width="5" height="5" fill="#ffb900" />
      </svg>
      <svg width="31" height="28" viewBox="0 0 31 28" className="ml-[32px]">
        <path d="M5 10L17 1Q18.500 0 20 1L31 9V24Q31 27 28 27H9Q5 27 5 24Z" fill="#1680d8" />
        <path d="M12 7L26 6V14L12 17Z" fill="#1a6fd0" />
        <path d="M31 11L10 23V25Q10 27 12 27H28Q31 27 31 24Z" fill="#45cdf7" />
        <path d="M15 15L31 5.500V12L16 21Z" fill="#0b4fa3" />
        <rect x="0" y="6" width="15" height="16" rx="2" fill="#0a64c2" />
        <ellipse cx="7.500" cy="14" rx="3.500" ry="4" fill="none" stroke="#fff" strokeWidth="2" />
      </svg>
      <div className="ml-[17px] flex h-[50px] w-[61px] flex-col items-center bg-[#4a4e51]">
        <svg width="31" height="31" viewBox="0 0 31 31" className="mt-[9px]">
          <defs>
            <linearGradient id="edA" x1="0" y1="0" x2="1" y2="0.400">
              <stop offset="0" stopColor="#2ab2e8" />
              <stop offset="0.600" stopColor="#36c8a8" />
              <stop offset="1" stopColor="#6be05a" />
            </linearGradient>
          </defs>
          <circle cx="15.500" cy="15.500" r="15" fill="#0c6fc4" />
          <path d="M0.500 15Q2 1 15.500 0.500Q29 1 30.500 13Q30.500 21 22 21.500Q17 21.500 19 18Q20 12 13 10Q4 9 0.500 15Z" fill="url(#edA)" />
          <path d="M10 17Q9 26 20 28Q26 26 28.500 22Q22 25 16 21Q12 18 15 12.500Q11 13 10 17Z" fill="#0a4a94" />
          <path d="M0.800 14Q5 8 13 10Q8 12 8 19Q9 27 16 30.500Q2 30 0.800 14Z" fill="#1789d8" />
        </svg>
        <div className="mt-auto h-[3px] w-full bg-[#76b9ed]" />
      </div>
      <div className="relative ml-[6px] flex h-[50px] w-[51px] flex-col items-center">
        <svg width="30" height="30" viewBox="0 0 30 30" className="mt-[10px] mr-[2px]">
          <circle cx="15" cy="15" r="15" fill="#5865f2" />
          <path d="M6 20Q6 12 9 9Q15 7 21 9Q24 12 24 20L19 22L18 20H12L11 22Z" fill="#fff" />
          <circle cx="12" cy="15.500" r="1.900" fill="#5865f2" />
          <circle cx="18" cy="15.500" r="1.900" fill="#5865f2" />
        </svg>
        <Badge n="2" className="top-[23px] left-[23px] h-[18px] w-[18px] bg-[#e8484f] text-[13px]" />
        <div className="mt-auto h-[3px] w-full bg-[#76b9ed]" />
      </div>
      <div className="relative ml-[11px] flex h-[50px] w-[51px] flex-col items-center">
        <svg width="30" height="30" viewBox="0 0 30 30" className="mt-[11px] mr-[3px]">
          <circle cx="16" cy="5" r="4.500" fill="#7b83eb" />
          <circle cx="25" cy="6" r="3.500" fill="#5059c9" />
          <path d="M10 10H30V19Q28 24 22 24Q16 25 10 20Z" fill="#6169d6" />
          <rect x="0" y="8" width="15" height="15" rx="2" fill="#4b53bc" />
          <path d="M4 12H11M7.500 12V20" stroke="#fff" strokeWidth="2" />
        </svg>
        <Badge n="4" className="top-[21px] left-[21px] h-[21px] w-[21px] bg-[#c42b1c] text-[15px]" />
        <div className="mt-auto h-[3px] w-full bg-[#76b9ed]" />
      </div>
      <div className="relative mr-[11px] ml-auto h-[30px] w-[31px]">
        <svg width="31" height="30" viewBox="0 0 31 30">
          <path d="M20 6Q28 12 26 20Q20 30 8 26Q5 24 3 19Q14 22 20 6Z" fill="#f59b1e" />
          <path d="M4 11Q0 11 0 8Q0 5 4 5Q5 1 9 1Q13 1 14 4Q18 5 17.500 8Q17 11 14 11Z" fill="#b9cdf5" />
          <path d="M17 26Q13 26 13 22.500Q13 19 17 19Q18 15 22 15Q26 15 27 18Q31 19 30.500 22.500Q30 26 27 26Z" fill="#cbdaf8" />
        </svg>
        <Badge n="1" className="top-0 left-[15px] h-[15px] w-[15px] bg-[#d02a20] text-[11px]" />
      </div>
      <div className="flex items-center whitespace-nowrap">
        <span className="text-[17px] tracking-[-0.300px]">12°C</span>
        <span dir="rtl" className="ml-[10px] w-[70px] font-['DejaVu_Sans',sans-serif] text-[16.500px]">
          غائم جزئيًا
        </span>
      </div>
      <Svg w={16} h={9} vb="0 0 16 9" sw={1.500} className="ml-[31px]">
        <path d="M1 8L8 1L15 8" />
      </Svg>
      <Svg w={15} h={18} vb="0 0 15 18" sw={1.400} className="ml-[16px]">
        <rect x="1" y="4.500" width="9" height="9" rx="1.500" />
        <path d="M10 8L14 5.500V12.500L10 10M3 1.500Q6 0 10 1.500M3 16.500Q6 18 10 16.500" />
      </Svg>
      <svg width="20" height="14" viewBox="0 0 20 14" className="ml-[11px]" fill="none" stroke="#fff" strokeWidth="1.200">
        <rect x="4.500" y="3.500" width="13.500" height="8.500" />
        <rect x="6.500" y="5" width="10" height="5.500" fill="#fff" />
        <path d="M19 6V10M1 1V4H5V1M3 4V8" />
      </svg>
      <Svg w={17} h={17} vb="0 0 17 17" sw={1.300} className="ml-[12px]">
        <path d="M1 16Q1 2 16 1M5 16Q5 6 16 5M9 16Q9 10 16 9" />
        <circle cx="14" cy="15" r="1.200" fill="currentColor" />
      </Svg>
      <Svg w={21} h={17} vb="0 0 21 17" sw={1.300} className="ml-[10px]">
        <path d="M1 6H4L8 2V15L4 11H1ZM11 6Q12.500 8.500 11 11M14 4Q17 8.500 14 13M17 2Q21.500 8.500 17 15" />
      </Svg>
      <div className="ml-[12px] flex w-[76px] flex-col items-center text-[14px] leading-[23px] whitespace-nowrap">
        <span>21:30</span>
        <span>10/02/2025</span>
      </div>
      <svg width="20" height="20" viewBox="0 0 20 20" fill="none" stroke="#fff" strokeWidth="1.300" className="mr-[25px] ml-[24px]">
        <path d="M1 1H19V15H13L10 18.500L7 15H1Z" />
      </svg>
      <div className="mr-[5px] h-[50px] w-px bg-[#6d7377]" />
    </div>
  );
}

export default function App() {
  return (
    <div className="flex h-[1080px] w-[1920px] flex-col overflow-hidden bg-[#f7f7f7] font-['Inter',sans-serif]">
      <TabStrip />
      <AddressBar />
      <div className="relative mx-[5px] flex h-[933px] shrink-0 flex-col overflow-hidden rounded-[11px] bg-[#14181b]">
        <Header />
        <div className="flex h-[866px]">
          <Rail />
          <TreePanel />
          <div className="flex w-[13px] shrink-0 justify-center bg-[#323845] pt-[414px]">
            <div className="h-[38px] w-[6px] rounded-full bg-[#95a1ac]" />
          </div>
          <Canvas />
          <div className="flex w-[15px] shrink-0 justify-center bg-[#323845] pt-[54px]">
            <div className="h-[712px] w-[13px] rounded-full bg-[#101214]" />
          </div>
          <Properties />
        </div>
        <div className="absolute top-[848px] left-[1825px] flex h-[60px] w-[60px] items-center justify-center rounded-full bg-[#4b39ef] text-white shadow-[0_4px_12px_rgba(0,0,0,0.5)]">
          <Svg w={35} h={37} vb="0 0 35 37" sw={2.600}>
            <circle cx="15" cy="15" r="13.500" />
            <path d="M8.500 18Q15 22.500 21.500 18" />
            <path d="M25 26L32 33.500" strokeWidth="5" />
          </Svg>
        </div>
      </div>
      <div className="h-[4px] shrink-0" />
      <Taskbar />
    </div>
  );
}
